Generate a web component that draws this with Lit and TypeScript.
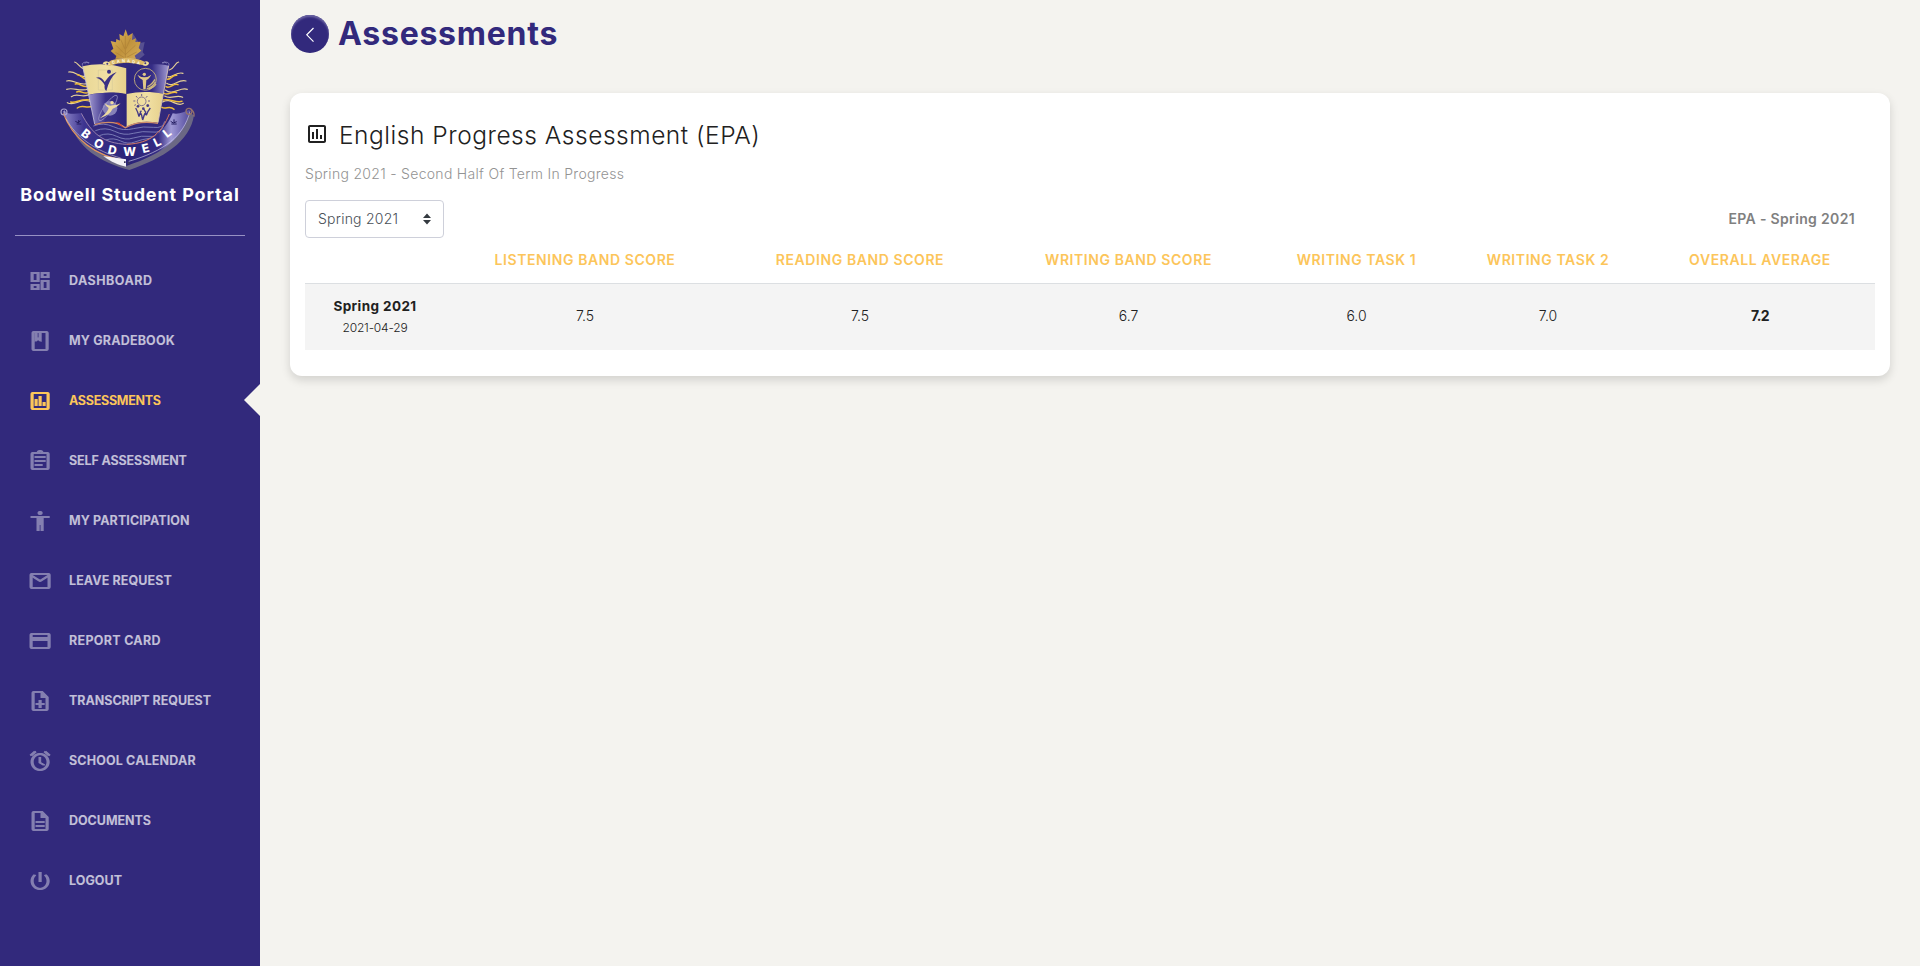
import { LitElement, html, css, svg } from "lit";
import { customElement } from "lit/decorators.js";
import { classMap } from "lit/directives/class-map.js";

const ICONS: Record<string, string> = {
  dashboard: "M19 5v2h-4V5h4M9 5v6H5V5h4m10 8v6h-4v-6h4M9 17v2H5v-2h4M21 3h-8v6h8V3zM11 3H3v10h8V3zm10 8h-8v10h8V11zm-10 4H3v6h8v-6z",
  book: "M18 2H6c-1.1 0-2 .9-2 2v16c0 1.1.9 2 2 2h12c1.1 0 2-.9 2-2V4c0-1.1-.9-2-2-2zM9 4h2v5l-1-.75L9 9V4zm9 16H6V4h1v9l3-2.25L13 13V4h5v16z",
  assessment: "M19 3H5c-1.1 0-2 .9-2 2v14c0 1.1.9 2 2 2h14c1.1 0 2-.9 2-2V5c0-1.1-.9-2-2-2zm0 16H5V5h14v14zM7 10h2v7H7zm4-3h2v10h-2zm4 6h2v4h-2z",
  assignment: "M7 15h7v2H7zm0-4h10v2H7zm0-4h10v2H7zm12-4h-4.18C14.4 1.84 13.3 1 12 1c-1.3 0-2.4.84-2.82 2H5c-1.1 0-2 .9-2 2v14c0 1.1.9 2 2 2h14c1.1 0 2-.9 2-2V5c0-1.1-.9-2-2-2zm-7-.25c.41 0 .75.34.75.75s-.34.75-.75.75-.75-.34-.75-.75.34-.75.75-.75zM19 19H5V5h14v14z",
  person: "M12 2c1.1 0 2 .9 2 2s-.9 2-2 2-2-.9-2-2 .9-2 2-2zm9 7h-6v13h-2v-6h-2v6H9V9H3V7h18v2z",
  mail: "M22 6c0-1.1-.9-2-2-2H4c-1.1 0-2 .9-2 2v12c0 1.1.9 2 2 2h16c1.1 0 2-.9 2-2V6zm-2 0l-8 5-8-5h16zm0 12H4V8l8 5 8-5v10z",
  card: "M20 4H4c-1.11 0-1.99.89-1.99 2L2 18c0 1.11.89 2 2 2h16c1.11 0 2-.89 2-2V6c0-1.11-.89-2-2-2zm0 14H4v-6h16v6zm0-10H4V6h16v2z",
  noteAdd: "M13 11h-2v3H8v2h3v3h2v-3h3v-2h-3zm1-9H6c-1.1 0-2 .9-2 2v16c0 1.1.89 2 1.99 2H18c1.1 0 2-.9 2-2V8l-6-6zm4 18H6V4h7v5h5v11z",
  alarm: "M12.5 8H11v6l4.75 2.85.75-1.23-4-2.37zm4.837-6.19l4.607 3.845-1.28 1.535-4.61-3.843zm-10.674 0l1.282 1.536L3.337 7.19l-1.28-1.536zM12 4c-4.97 0-9 4.03-9 9s4.03 9 9 9 9-4.03 9-9-4.03-9-9-9zm0 16c-3.86 0-7-3.14-7-7s3.14-7 7-7 7 3.14 7 7-3.14 7-7 7z",
  document: "M8 16h8v2H8zm0-4h8v2H8zm6-10H6c-1.1 0-2 .9-2 2v16c0 1.1.89 2 1.99 2H18c1.1 0 2-.9 2-2V8l-6-6zm4 18H6V4h7v5h5v11z",
  power: "M13 3h-2v10h2V3zm4.83 2.17l-1.42 1.42C17.99 7.86 19 9.81 19 12c0 3.87-3.13 7-7 7s-7-3.13-7-7c0-2.19 1.01-4.14 2.58-5.42L6.17 5.17C4.23 6.82 3 9.26 3 12c0 4.97 4.03 9 9 9s9-4.03 9-9c0-2.74-1.23-5.18-3.17-6.83z",
};

interface MenuItem { label: string; icon: string; tracking: number; active?: boolean }

const MENU: MenuItem[] = [
  { label: "Dashboard", icon: "dashboard", tracking: 0.48 },
  { label: "My Gradebook", icon: "book", tracking: 0.17 },
  { label: "Assessments", icon: "assessment", tracking: -0.28, active: true },
  { label: "Self Assessment", icon: "assignment", tracking: -0.13 },
  { label: "My Participation", icon: "person", tracking: 0.09 },
  { label: "Leave Request", icon: "mail", tracking: 0.1 },
  { label: "Report Card", icon: "card", tracking: 0.3 },
  { label: "Transcript Request", icon: "noteAdd", tracking: -0.04 },
  { label: "School Calendar", icon: "alarm", tracking: 0.15 },
  { label: "Documents", icon: "document", tracking: -0.04 },
  { label: "Logout", icon: "power", tracking: 0.03 },
];

const COLUMNS = [
  { label: "Listening Band Score", value: "7.5" },
  { label: "Reading Band Score", value: "7.5" },
  { label: "Writing Band Score", value: "6.7" },
  { label: "Writing Task 1", value: "6.0" },
  { label: "Writing Task 2", value: "7.0" },
  { label: "Overall Average", value: "7.2" },
];

@customElement("school-crest")
export class SchoolCrest extends LitElement {
  static styles = css`
    :host { display: block; width: 160px; height: 160px; }
    svg { display: block; width: 100%; height: 100%; overflow: visible; }
    .name { font: 800 36px Inter, sans-serif; fill: #fff; }
    .country { font: 700 12px Inter, sans-serif; fill: #fffbe8; }
  `;
  render() {
    return html`<svg viewBox="0 0 480 480" fill="none">
      <defs>
        <linearGradient id="leaf" x1="0" y1="0" x2="1" y2="1"><stop offset="0" stop-color="#e0b85c"/><stop offset=".5" stop-color="#c0923c"/><stop offset="1" stop-color="#d8b05b"/></linearGradient>
        <linearGradient id="cream" x1="0" x2="1"><stop offset="0" stop-color="#e9d795"/><stop offset=".55" stop-color="#f1e0a4"/><stop offset="1" stop-color="#e6d08c"/></linearGradient>
        <linearGradient id="blueL" x1="0" x2="1"><stop offset="0" stop-color="#9f97d0"/><stop offset=".45" stop-color="#3a3189"/><stop offset="1" stop-color="#2c2478"/></linearGradient>
        <linearGradient id="blueR" x1="0" x2="1"><stop offset="0" stop-color="#2f277c"/><stop offset=".6" stop-color="#352c85"/><stop offset="1" stop-color="#a29bd2"/></linearGradient>
        <linearGradient id="band" x1="40" x2="425" y1="0" y2="0" gradientUnits="userSpaceOnUse"><stop offset="0" stop-color="#8d86c8"/><stop offset=".16" stop-color="#3d3490"/><stop offset=".5" stop-color="#2b2377"/><stop offset=".74" stop-color="#342b83"/><stop offset=".84" stop-color="#a09ad6"/><stop offset="1" stop-color="#4a4197"/></linearGradient>
      </defs>
      <path d="M55 296C80 385 150 425 238 450C340 415 420 365 432 286L415 276L404 300L240 432Z" fill="#6b6884"/>
      <path d="M196 66l52-26 20 30 16-4-6 30 6 8-22 18h-44z" fill="#575090"/>
      <g stroke-linecap="round">
        <g stroke="#e6d196" stroke-width="3.5">
          <path d="M74 126C84 128 88 144 104 148M56 156C74 152 88 172 108 170M50 183C70 176 88 200 114 190M50 208C72 200 90 218 116 206M64 230C84 216 98 238 120 222M52 248C76 262 92 230 124 246"/>
          <path d="M386 126C374 128 374 146 358 150M399 160C380 154 368 174 354 170M408 183C384 176 370 204 350 190M412 208C390 200 368 228 346 210M398 232C380 222 362 240 344 228M400 250C380 264 362 230 338 246"/>
        </g>
        <g stroke="#f0bd39" stroke-width="4.5">
          <path d="M82 164C94 164 98 178 110 178M76 192C90 188 100 206 116 198M80 216C94 210 104 226 118 216M62 246C78 250 90 236 120 240M82 264C98 252 110 268 128 258"/>
          <path d="M380 166C366 164 364 178 352 178M384 194C370 188 360 208 348 200M380 218C366 212 356 228 342 220M396 244C376 250 360 234 340 240M372 268C358 254 348 270 336 262"/>
        </g>
      </g>
      <g stroke="#8589bf" stroke-width="2.5">
        <path d="M130 318Q160 306 190 320T250 326T310 322T344 304"/>
        <path d="M136 332Q166 320 194 334T250 340T306 336T340 318"/>
        <path d="M148 347Q174 336 200 349T250 354T300 349T330 334"/>
        <path d="M168 360Q190 352 212 363T254 366T304 354"/>
      </g>
      <path d="M38 272C54 284 74 282 94 280C126 342 160 370 230 373C304 370 344 336 368 280C386 284 404 276 422 268C406 350 340 402 229 438L226 418C140 410 66 350 38 272Z" fill="url(#band)"/>
      <path d="M94 280C126 342 160 370 230 373" stroke="#a98fb4" stroke-width="2.5"/>
      <path d="M230 373C304 370 336 336 358 282" stroke="#d97a62" stroke-width="3"/>
      <path d="M40 280C66 352 138 412 226 420" stroke="#e79459" stroke-width="3.5"/>
      <path d="M48 296C78 352 140 394 212 414" stroke="#f3e6d2" stroke-width="1.5"/>
      <path d="M420 274C402 348 342 394 236 424" stroke="#c9c5e4" stroke-width="2"/>
      <path d="M160 408L228 418V440C206 436 184 426 160 408Z" fill="#f3f1f6"/>
      <path d="M222 424h5v5h-5zM233 424l8 5-8 6z" fill="#3b3759"/>
      <g stroke="#aaa3cf" stroke-width="3.5">
        <circle cx="42" cy="276" r="9"/>
        <path d="M42 280Q48 276 42 272"/>
      </g>
      <g stroke="#94726c" stroke-width="4">
        <circle cx="417" cy="274" r="9"/>
        <path d="M422 268Q434 274 432 290"/>
      </g>
      <path d="M76 304l8 4 8-6M80 312h14M86 300v10M362 304l8 5 10-4M364 312h16M372 298v10" stroke="#231c60" stroke-width="3"/>

      <path d="M98 139C140 128 190 132 229 145V222C190 214 150 218 116 224Z" fill="url(#cream)"/>
      <path d="M230 145C270 132 320 130 356 137L340 221C302 214 264 214 230 222Z" fill="url(#blueR)"/>
      <path d="M116 224C150 218 190 214 229 224V320C200 302 166 302 134 312Z" fill="url(#blueL)"/>
      <path d="M230 222C264 214 302 214 340 221L324 308C290 302 256 304 230 320Z" fill="url(#cream)"/>
      <path d="M98 139L134 312" stroke="#c8c3dd" stroke-width="2.5"/>
      <path d="M356 137L324 308" stroke="#dcc7b8" stroke-width="2.5"/>
      <path d="M134 314C166 304 200 304 226 323C256 306 290 304 324 310" stroke="#cf8e6a" stroke-width="4"/>
      <path d="M196 306L222 324L208 308Z" fill="#d4472e"/>
      <path d="M98 137A10 7 0 1 1 116 130M118 128Q110 124 104 130M356 137A10 7 0 1 0 338 130M336 128Q346 124 350 130" stroke="#8983bb" stroke-width="2.5"/>

      <path d="M145 150h42v60h-42z" stroke="#d8ca98" stroke-width="2"/>
      <circle cx="177" cy="155" r="6" fill="#3a3085"/>
      <path d="M138 173Q154 168 164 186Q180 162 200 156Q178 176 169 213Q162 208 164 196Q156 178 138 173Z" fill="#3a3085"/>
      <g stroke="#ceb77c" stroke-width="2.5">
        <circle cx="286" cy="178" r="33"/>
        <path d="M290 206Q308 202 316 186M296 208Q312 202 318 192M292 200Q306 194 315 178" stroke-width="4"/>
      </g>
      <circle cx="283" cy="163" r="5" fill="#e0c788"/>
      <path d="M262 164Q272 172 283 172Q294 172 304 164Q296 178 289 180L287 208H280L278 180Q268 176 262 164Z" fill="#e0c788"/>
      <circle cx="180" cy="265" r="22" fill="#8580b8"/>
      <ellipse cx="174" cy="264" rx="46" ry="12" transform="rotate(-55 174 264)" stroke="#a19bc9" stroke-width="2"/>
      <circle cx="186" cy="248" r="5" fill="#eddaa0"/>
      <path d="M164 250Q176 260 188 256Q202 256 212 250Q198 264 188 266Q180 284 150 295Q174 276 176 264Q168 260 164 250Z" fill="#eddaa0"/>
      <circle cx="275" cy="244" r="13" stroke="#73658a" stroke-width="2.5"/>
      <path d="M275 222v6M258 228l4 5M292 228l-4 5M250 243h6M294 243h6M253 256l5-2M298 257l-5-3" stroke="#73658a" stroke-width="3"/>
      <g fill="#443a86">
        <circle cx="264" cy="259" r="4"/><circle cx="280" cy="266" r="4"/><circle cx="293" cy="257" r="4"/>
      </g>
      <path d="M257 264Q264 276 267 290Q270 278 274 272M270 274Q276 284 278 300Q282 284 288 274M282 268Q288 276 289 286Q294 272 301 264" stroke="#443a86" stroke-width="4"/>

      <path d="M227 28L234 48L248 39L246 60L258 55L256 66L272 65L266 84L274 92L254 107L258 116L230 114L229 126H222L222 114L196 117L199 108L182 93L190 86L182 63L198 67L199 57L210 62L208 42L220 49Z" fill="url(#leaf)"/>
      <path d="M226 48V118M226 104L198 76M226 104L256 76M224 86L212 58M228 86L242 54M222 112L196 97M230 112L260 96" stroke="#a97d34" stroke-width="1.8"/>
      <path d="M158 131Q162 122 176 126L184 121Q228 106 272 120L284 125Q298 122 296 132Q292 140 280 136Q228 120 178 137Q168 138 164 132Z" fill="#dcb866"/>
      <path d="M158 131Q162 122 176 126L182 134Q170 140 164 132ZM284 125Q298 122 296 132Q290 140 278 135Z" fill="#f1de9f"/>
      <circle cx="172" cy="131" r="3" fill="#40367f"/><circle cx="286" cy="130" r="3" fill="#40367f"/>
      <text class="country" x="187 201 216 231 246 260" y="132 129 127 127 129 132" rotate="-12 -7 -2 2 7 12">CANADA</text>
      <text class="name" x="91 128 172 220 279 318 351" y="344 376 400 408 400 382 355" rotate="38 28 13 0 -14 -26 -38">BODWELL</text>
    </svg>`;
  }
}

@customElement("app-root")
export class AppRoot extends LitElement {
  static styles = css`
    :host {
      display: flex;
      min-height: 966px;
      background: #f4f3ef;
      color: #212121;
      font: 300 14px/20px Inter, "Open Sans", sans-serif;
    }
    * { box-sizing: border-box; }
    .sidebar { width: 260px; flex: none; background: #32297c; display: flex; flex-direction: column; }
    .brand { height: 236px; margin: 0 15px; padding-top: 20px; border-bottom: 1px solid #9791c4; display: flex; flex-direction: column; align-items: center; }
    .portal { margin-top: 3px; font-size: 18px; line-height: 24px; font-weight: 700; letter-spacing: 0.88px; white-space: nowrap; color: #fff; }
    .menu { display: flex; flex-direction: column; padding-top: 15px; }
    .item { display: grid; grid-template-columns: 24px auto 1fr; column-gap: 17px; height: 60px; padding-left: 28px; align-items: center; color: #fff; }
    .item .label { font-size: 12.5px; font-weight: 750; text-transform: uppercase; white-space: nowrap; opacity: 0.7; }
    .item .icon { opacity: 0.4; }
    .item.active { color: #fcc55a; }
    .item.active .label, .item.active .icon { opacity: 1; }
    .icon { display: block; width: 24px; height: 24px; fill: currentColor; overflow: visible; }
    .pointer { justify-self: end; width: 16px; height: 32px; margin-top: -2px; background: #f4f3ef; clip-path: polygon(100% 0, 0 50%, 100% 100%); }
    .main { flex: 1; padding: 15px 30px 0; }
    .header { display: flex; align-items: center; height: 38px; gap: 9px; padding-left: 1px; }
    .back { width: 38px; height: 38px; border: 0; padding: 0; border-radius: 50%; background: #32297c; box-shadow: inset 0 2px 2px #6b64a3; display: grid; place-items: center; }
    .back svg { width: 38px; height: 38px; }
    .title { margin: 0; font-size: 32px; line-height: 38px; font-weight: 670; letter-spacing: 0.75px; color: #32297c; }
    .card { margin-top: 40px; height: 283px; padding: 26px 15px 0; border-radius: 12px; background: #fff; box-shadow: 0 4px 10px rgba(0, 0, 0, 0.14); }
    .heading { display: flex; align-items: center; gap: 10px; height: 30px; margin: 0; font-size: 24.5px; line-height: 30px; font-weight: 300; letter-spacing: 0.52px; }
    .heading span { padding-top: 2px; }
    .subtitle { margin: 14px 0 0; font-size: 14px; line-height: 22px; letter-spacing: 0.3px; color: #939393; }
    .tools { display: flex; justify-content: space-between; align-items: center; margin-top: 15px; padding-right: 20px; }
    .term { display: flex; align-items: center; justify-content: space-between; width: 139px; height: 38px; padding: 0 11px 0 12px; border: 1px solid #ced0da; border-radius: 4px; letter-spacing: 0.23px; color: #495057; }
    .term svg { width: 10px; height: 12px; fill: #343a40; }
    .caption { font-size: 14px; font-weight: 600; letter-spacing: 0.34px; color: #808080; }
    .row { display: grid; grid-template-columns: 140px 280px 270px 267px 189px 194px 230px; align-items: center; text-align: center; }
    .head { height: 45px; padding-bottom: 1px; font-size: 14px; font-weight: 620; letter-spacing: 0.58px; text-transform: uppercase; white-space: nowrap; color: #fcc55a; }
    .data { height: 67px; padding-bottom: 1px; border-top: 1px solid #dcdfe2; background: #f4f4f4; }
    .season { font-size: 13.5px; line-height: 21px; font-weight: 700; letter-spacing: 0.4px; }
    .date { font-size: 12px; line-height: 21px; letter-spacing: -0.2px; }
    .score { padding-bottom: 2px; }
    .overall { font-weight: 700; letter-spacing: -0.6px; }
  `;

  private icon(name: string, bold = true) {
    const d = ICONS[name];
    return html`<svg class="icon" viewBox="0 0 24 24">
      ${bold
        ? svg`<path transform="translate(-.5 0)" d=${d}></path><path transform="translate(.7 0)" d=${d}></path>`
        : svg`<path d=${d}></path>`}
    </svg>`;
  }

  render() {
    return html`
      <nav class="sidebar">
        <div class="brand">
          <school-crest></school-crest>
          <div class="portal">Bodwell Student Portal</div>
        </div>
        <div class="menu">
          ${MENU.map((m) => html`
            <div class=${classMap({ item: true, active: !!m.active })}>
              ${this.icon(m.icon)}
              <span class="label" style="letter-spacing:${m.tracking}px">${m.label}</span>
              ${m.active ? html`<span class="pointer"></span>` : ""}
            </div>`)}
        </div>
      </nav>
      <main class="main">
        <header class="header">
          <button class="back" aria-label="Back">
            <svg viewBox="0 0 38 38" fill="none" stroke="#fff" stroke-width="1.2"><path d="M22.5 13L15.8 19.8L22.5 26.6"/></svg>
          </button>
          <h1 class="title">Assessments</h1>
        </header>
        <section class="card">
          <h2 class="heading">${this.icon("assessment", false)}<span>English Progress Assessment (EPA)</span></h2>
          <p class="subtitle">Spring 2021 - Second Half Of Term In Progress</p>
          <div class="tools">
            <div class="term"><span>Spring 2021</span>
              <svg viewBox="0 0 10 12"><path d="M5 0.5L9 5H1zM5 11.5L1 7H9z"/></svg>
            </div>
            <span class="caption">EPA - Spring 2021</span>
          </div>
          <div class="row head"><span></span>${COLUMNS.map((c) => html`<span>${c.label}</span>`)}</div>
          <div class="row data">
            <div><div class="season">Spring 2021</div><div class="date">2021-04-29</div></div>
            ${COLUMNS.map((c, i) => html`<span class=${classMap({ score: true, overall: i === COLUMNS.length - 1 })}>${c.value}</span>`)}
          </div>
        </section>
      </main>`;
  }
}
